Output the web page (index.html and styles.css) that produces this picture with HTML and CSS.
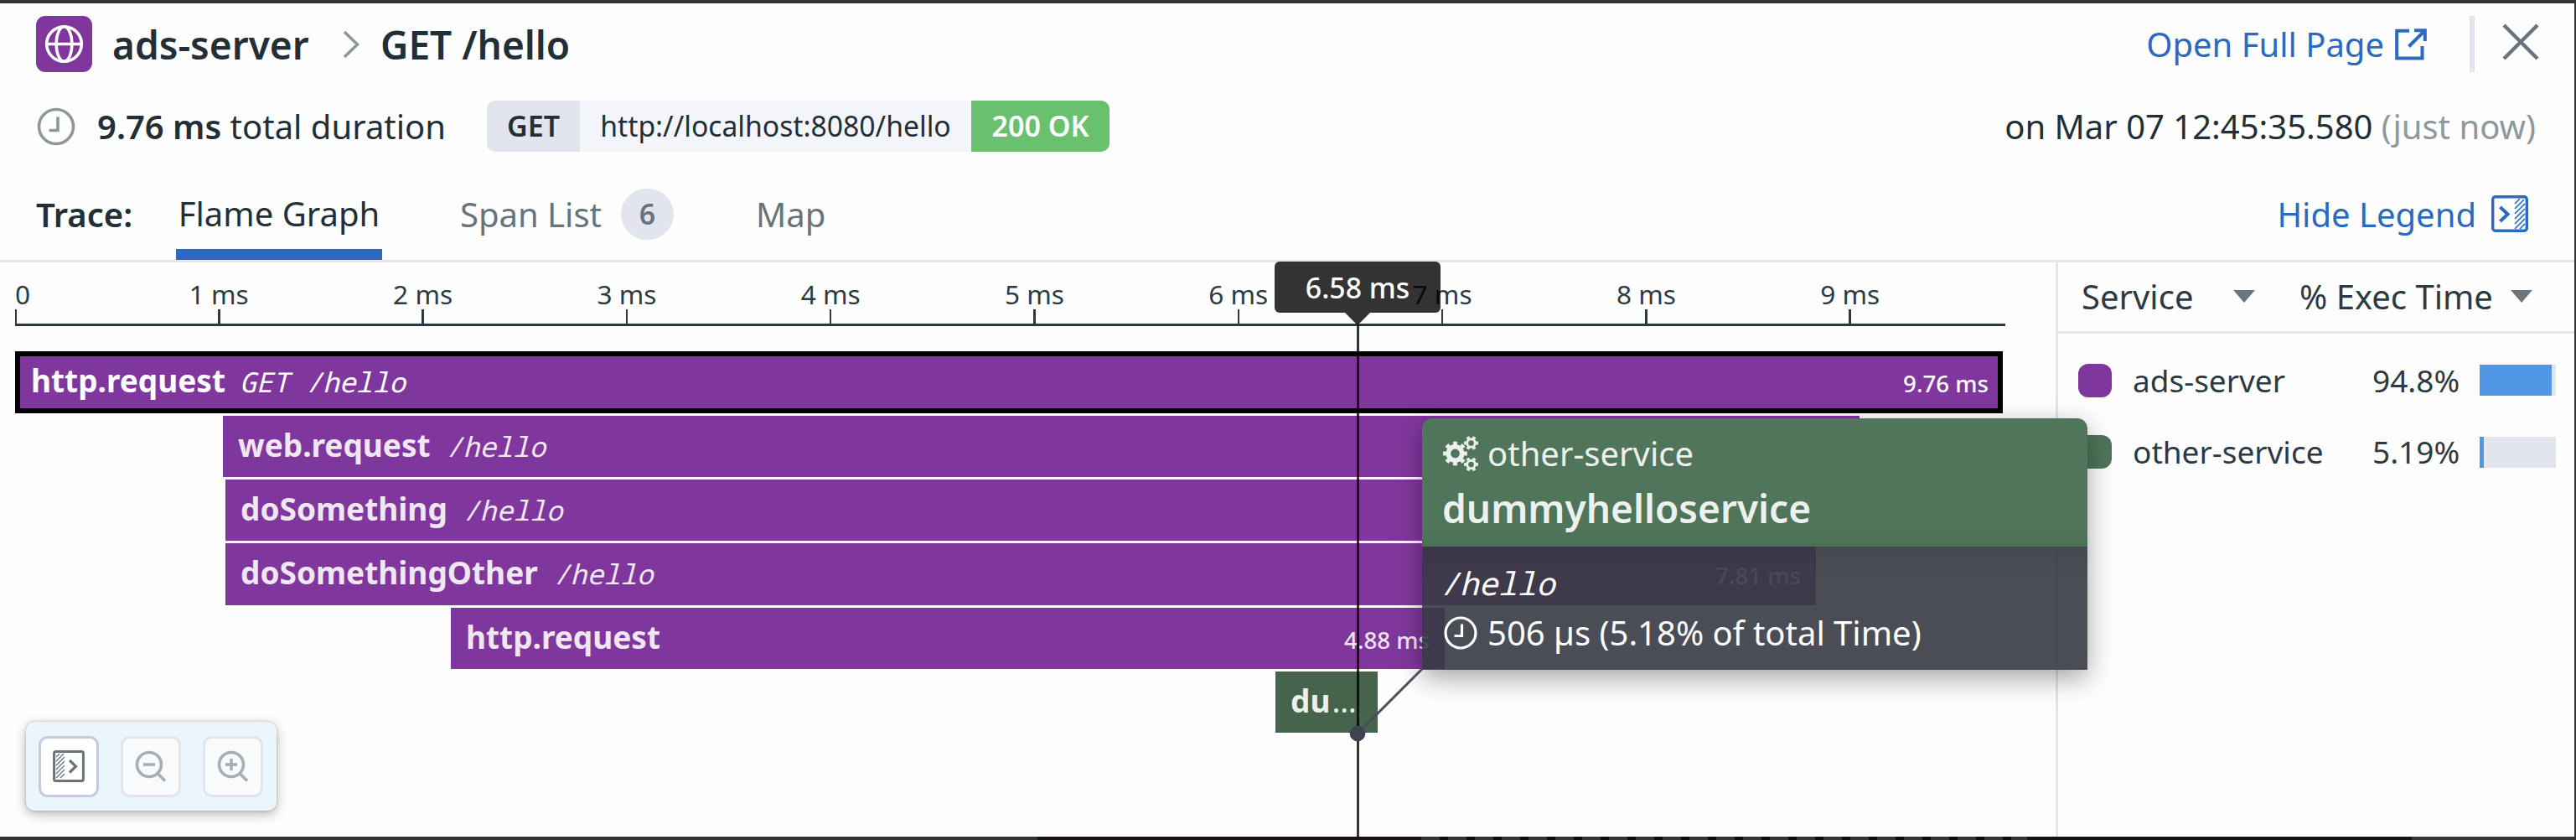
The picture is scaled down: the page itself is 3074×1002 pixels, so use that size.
FILE: index.html
```html
<!DOCTYPE html>
<html lang="en">
<head>
<meta charset="utf-8">
<title>ads-server – GET /hello</title>
<link rel="stylesheet" href="styles.css">
</head>
<body>
<div class="panel">
  <header class="title-row">
    <span class="service-icon">
      <svg width="47" height="47" viewBox="0 0 47 47" fill="none" stroke="#fff" stroke-width="3.6"><circle cx="23.5" cy="23.5" r="20.8"/><ellipse cx="23.5" cy="23.5" rx="9.3" ry="20.8"/><path d="M3 23.5h41"/></svg>
    </span>
    <h1 class="crumb crumb-service">ads-server</h1>
    <svg class="crumb-sep" width="20" height="34" viewBox="0 0 20 34" fill="none" stroke="#8d979c" stroke-width="3.6"><path d="M2 2l15.500 15L2 32"/></svg>
    <h1 class="crumb">GET /hello</h1>
    <a class="link push">Open Full Page</a>
    <svg class="external" width="38" height="38" viewBox="0 0 38 38" fill="none" stroke="#2c6abf" stroke-width="4"><path d="M17 2.800H2.200V35.500H32.500V21M23 2.200H35.800V15M35 3L16.500 21.500"/></svg>
    <span class="divider"></span>
    <svg class="close" width="44" height="44" viewBox="0 0 44 44" fill="none" stroke="#68737a" stroke-width="4.400"><path d="M2 2l40 40M42 2L2 42"/></svg>
  </header>

  <div class="meta-row">
    <svg class="clock" width="46" height="46" viewBox="0 0 46 46" fill="none" stroke="#8d979c" stroke-width="3.600"><circle cx="23" cy="23" r="20.500"/><path d="M25 11.500V27.500H14.500"/></svg>
    <span class="duration"><b>9.76 ms</b> total duration</span>
    <span class="request"><b class="verb">GET</b><span class="url">http://localhost:8080/hello</span><b class="status">200 OK</b></span>
    <span class="push">on Mar 07 12:45:35.580 <span class="ago">(just now)</span></span>
  </div>

  <nav class="tabs">
    <b class="tabs-label">Trace:</b>
    <a class="tab tab-active">Flame Graph</a>
    <a class="tab tab-spans">Span List <span class="count">6</span></a>
    <a class="tab">Map</a>
    <a class="link push">Hide Legend</a>
    <svg class="legend-toggle" width="44" height="44" viewBox="0 0 44 44" fill="none" stroke="#2c6abf"><rect x="1.700" y="1.700" width="40.600" height="40.600" rx="3" stroke-width="3.400"/><path d="M10.500 14l9 8.500-9 8.500" stroke-width="4"/><path stroke-width="1.700" d="M28 10l6-6M28 16L39 5M28 22L40 10M28 28L40 16M28 34L40 22M28 40L40 28M34 40L40 34"/></svg>
  </nav>

  <main class="trace">
    <section class="flame">
      <div class="axis">
        <span class="tick tick-zero">0</span><span class="tick">1 ms</span><span class="tick">2 ms</span><span class="tick">3 ms</span><span class="tick">4 ms</span><span class="tick">5 ms</span><span class="tick">6 ms</span><span class="tick">7 ms</span><span class="tick">8 ms</span><span class="tick">9 ms</span>
      </div>
      <div class="spans">
        <div class="span span-selected" style="margin-left:18px;width:2372px"><b>http.request</b><i>GET /hello</i><small>9.76 ms</small></div>
        <div class="span" style="margin-left:266px;width:1953px"><b>web.request</b><i>/hello</i></div>
        <div class="span" style="margin-left:269px;width:1900px"><b>doSomething</b><i>/hello</i></div>
        <div class="span" style="margin-left:269px;width:1898px"><b>doSomethingOther</b><i>/hello</i><small>7.81 ms</small></div>
        <div class="span" style="margin-left:538px;width:1186px"><b>http.request</b><small>4.88 ms</small></div>
        <div class="span span-other" style="margin-left:1522px;width:122px"><b>du<span class="dots">…</span></b></div>
      </div>
      <div class="toolbar">
        <button class="tool"><svg width="38" height="38" viewBox="0 0 38 38" fill="none" stroke="#68737a"><rect x="1.600" y="1.600" width="34.800" height="34.800" rx="2" stroke-width="3"/><path d="M20 12l7.500 7.200L20 26.500" stroke-width="3.200"/><path stroke-width="1.300" d="M4 8l4-4M4 13L13 4M4 18L14 8M4 23L14 13M4 28L14 18M4 33L14 23M9 33L14 28"/></svg></button>
        <button class="tool tool-off"><svg width="38" height="38" viewBox="0 0 38 38" fill="none" stroke="#a8afb2" stroke-width="3.600"><circle cx="17" cy="17" r="14.500"/><path d="M10 17h14M27 27.500l9 9"/></svg></button>
        <button class="tool tool-off"><svg width="38" height="38" viewBox="0 0 38 38" fill="none" stroke="#a8afb2" stroke-width="3.600"><circle cx="17" cy="17" r="14.500"/><path d="M10 17h14M17 10v14M27 27.500l9 9"/></svg></button>
      </div>
    </section>

    <aside class="legend">
      <div class="legend-head"><span>Service</span><i class="caret"></i><span class="exec">% Exec Time</span><i class="caret caret-exec"></i></div>
      <div class="legend-row"><i class="swatch"></i><span class="name">ads-server</span><span class="pct">94.8%</span><span class="meter"><span class="fill" style="width:94.8%"></span></span></div>
      <div class="legend-row"><i class="swatch swatch-other"></i><span class="name">other-service</span><span class="pct">5.19%</span><span class="meter"><span class="fill" style="width:5.19%"></span></span></div>
    </aside>

    <div class="cursor-line"></div>
    <div class="cursor-label">6.58 ms</div>
    <div class="tooltip">
      <div class="tip-head">
        <div class="tip-service">
          <svg class="cogs" width="44" height="44" viewBox="0 0 44 44" fill="none" stroke="#edf1ee"><circle cx="15.500" cy="22" r="8.200" stroke-width="5.600"/><circle cx="15.500" cy="22" r="12.200" stroke-width="4.400" pathLength="80" stroke-dasharray="5.200 4.800" stroke-dashoffset="2.600"/><circle cx="34.500" cy="9.500" r="4.800" stroke-width="2.900"/><circle cx="34.500" cy="9.500" r="7.100" stroke-width="2.800" pathLength="60" stroke-dasharray="5 5" stroke-dashoffset="2.500"/><circle cx="34.500" cy="35" r="4.800" stroke-width="2.900"/><circle cx="34.500" cy="35" r="7.100" stroke-width="2.800" pathLength="60" stroke-dasharray="5 5" stroke-dashoffset="2.500"/></svg>
          other-service
        </div>
        <div class="tip-name">dummyhelloservice</div>
      </div>
      <div class="tip-body">
        <div class="tip-resource">/hello</div>
        <div class="tip-time"><svg width="40" height="40" viewBox="0 0 40 40" fill="none" stroke="#fff" stroke-width="3.200"><circle cx="20" cy="20" r="18"/><path d="M21.500 9.500V23.500H12.500"/></svg>506 µs (5.18% of total Time)</div>
      </div>
    </div>
    <svg class="leader" width="96" height="96" viewBox="0 0 96 96"><path d="M10 86L87 9" stroke="#4b4e58" stroke-width="3"/><circle cx="10" cy="86" r="9.300" fill="#3d4350"/></svg>
  </main>
  <footer class="edge"></footer>
</div>
</body>
</html>
```
FILE: styles.css
```css
* { box-sizing: border-box; }
body { margin: 0; font-family: "Noto Sans", sans-serif; font-size: 40px; color: #232f37; }
b { font-weight: 600; }
svg { display: block; flex: none; }
.panel { width: 3074px; height: 1002px; background: #fefefe; border-top: 4px solid #323232; border-right: 2px solid #323232; display: flex; flex-direction: column; overflow: hidden; white-space: nowrap; }
.push { margin-left: auto; }
.link { color: #2c6abf; }

.title-row { height: 97px; flex: none; display: flex; align-items: center; padding-left: 43px; padding-right: 42px; }
.service-icon { width: 67px; height: 67px; border-radius: 11px; background: #80379d; display: flex; align-items: center; justify-content: center; }
.crumb { margin: 1px 0 0; font-size: 46px; font-weight: 600; line-height: 60px; }
.crumb-service { margin-left: 24px; width: 275px; }
.crumb-sep { margin-right: 25px; }
.external { margin-left: 13px; }
.divider { width: 6px; height: 67px; background: #e2e5ed; margin-left: 51px; }
.close { margin-left: 33px; margin-top: -5px; }

.meta-row { height: 99px; flex: none; display: flex; align-items: center; padding-left: 44px; padding-right: 46px; }
.duration { margin-left: 26px; width: 465px; }
.ago { color: #8f989c; }
.request { display: flex; height: 61px; line-height: 61px; border-radius: 10px; overflow: hidden; font-size: 34px; background: #f4f5fa; }
.verb { width: 111px; background: #e2e5ed; text-align: center; }
.url { width: 467px; text-align: center; font-size: 33.7px; }
.status { width: 165px; background: #69c16f; color: #fff; text-align: center; }

.tabs { height: 113px; flex: none; display: flex; align-items: center; padding: 0 55px 0 43px; border-bottom: 3px solid #e2e5ed; }
.tabs-label { width: 167px; }
.tab { color: #68737a; }
.tab-active { width: 246px; height: 110px; line-height: 109px; text-align: center; color: #232f37; box-shadow: inset 0 -13px #2c6abf; }
.tab-spans { display: flex; align-items: center; margin-left: 93px; width: 353px; }
.count { width: 63px; height: 61px; line-height: 61px; border-radius: 31px; background: #e2e5ed; margin-left: 23px; font-size: 34px; font-weight: 600; text-align: center; }
.legend-toggle { margin-left: 18px; }

.trace { flex: 1; display: flex; position: relative; }
.flame { width: 2456px; border-right: 3px solid #e2e5ed; }
.axis { margin-left: 18px; width: 2375px; height: 76px; padding-top: 19px; border-bottom: 3px solid #2c3a43; display: flex; font-size: 31.6px; line-height: 37px; color: #2c3a43; }
.tick { width: 243.3px; flex: none; text-align: center; }
.tick::after { content: ""; display: block; width: 2.500px; height: 17px; margin: 0 auto; background: #2c3a43; }
.tick-zero { width: 121.650px; text-align: left; }
.tick-zero::after { margin: 0; width: 2px; }
.spans { margin-top: 30.300px; display: flex; flex-direction: column; gap: 2.950px; }
.span { height: 73.400px; padding: 0 18px; background: #80379d; color: #f0e7f3; display: flex; align-items: baseline; overflow: hidden; }
.span b { font-size: 37px; font-weight: 700; line-height: 69px; }
.span i, .tip-resource { font-family: "Noto Sans Mono", "DejaVu Sans Mono", monospace; font-style: italic; }
.span i { font-size: 33px; line-height: 40px; margin-left: 19px; }
.span small { font-size: 27.700px; font-weight: 500; line-height: 34px; margin-left: auto; }
.span-selected { border: 6px solid #000; padding: 0 11px 0 13px; color: #fff; }
.span-selected b { line-height: 57px; }
.span-selected i { margin-left: 17px; }
.span-other { background: #46644c; color: #edf1ee; }
.dots { font-weight: 400; margin-left: 2px; letter-spacing: 0; }

.toolbar { position: absolute; left: 31px; top: 548px; width: 299px; height: 106px; border-radius: 10px; background: #eaf5fc; box-shadow: 0 4px 14px rgba(0,0,0,.3), 0 0 3px rgba(0,0,0,.22); display: flex; align-items: center; gap: 26px; padding-left: 15px; }
.tool { width: 72px; height: 73px; border: 3px solid #c4cae0; border-radius: 11px; background: #fff; padding: 0; display: flex; align-items: center; justify-content: center; }
.tool-off { border-color: #e2e5ed; background: #f9fafc; }

.legend { flex: 1; color: #2c3a43; }
.legend-head { height: 85px; border-bottom: 3px solid #e2e5ed; display: flex; align-items: center; padding-left: 28px; padding-bottom: 1px; }
.legend-head span { width: 181px; }
.caret { border: 13.500px solid transparent; border-top: 15px solid #6c757b; border-bottom: 0; }
.legend-head .exec { margin-left: 53px; width: 252px; }
.legend-row { height: 40px; margin-top: 35.500px; display: flex; align-items: center; padding-left: 24px; font-size: 37px; line-height: 38px; }
.legend-row + .legend-row { margin-top: 45.500px; }
.swatch { width: 40px; height: 40px; border-radius: 12px; background: #80379d; }
.swatch-other { background: #50755a; }
.name { margin-left: 25px; width: 286px; }
.pct { width: 128px; }
.meter { width: 91px; height: 37px; background: #e2e5ed; }
.fill { display: block; height: 100%; background: #5296e6; }

.cursor-line { position: absolute; left: 1619px; top: 75px; width: 2.500px; bottom: 0; background: rgba(0,0,0,.8); }
.cursor-label { position: absolute; left: 1521px; top: -1px; width: 198px; height: 61px; line-height: 62px; border-radius: 6px; background: rgba(0,0,0,.8); color: #fff; font-size: 33.800px; font-weight: 500; text-align: center; }
.cursor-label::after { content: ""; position: absolute; left: 84px; top: 61px; border: 15px solid transparent; border-top-color: rgba(0,0,0,.8); border-bottom: 0; }
.tooltip { position: absolute; left: 1697px; top: 186px; width: 794px; height: 300px; border-radius: 12px 12px 0 0; box-shadow: 0 10px 32px rgba(0,0,0,.36); overflow: hidden; }
.tip-head { height: 153px; padding: 19px 24px; background: linear-gradient(#50755a 86%, #4c7055); color: #edf1ee; }
.tip-service { height: 46px; line-height: 46px; display: flex; align-items: center; gap: 10px; }
.tip-name { font-size: 46px; font-weight: 600; line-height: 60px; margin-top: 12px; }
.tip-body { height: 147px; padding: 18px 26px; background: linear-gradient(rgba(52,54,62,.9), rgba(55,58,67,.9) 30%); color: #fff; }
.tip-resource { font-size: 38px; line-height: 50px; margin-left: -4px; }
.tip-time { display: flex; align-items: center; gap: 12px; line-height: 50px; margin-top: 10px; }
.leader { position: absolute; left: 1610px; top: 476px; }

.edge { height: 4px; flex: none; background: linear-gradient(90deg, #323232 1238px, #181414 1238px 1696px, transparent 1696px 2419px, #141212 2419px 2878px, #363636 2878px), repeating-linear-gradient(90deg, #353535 0 22px, #0c0c0c 22px 32px); }
```
